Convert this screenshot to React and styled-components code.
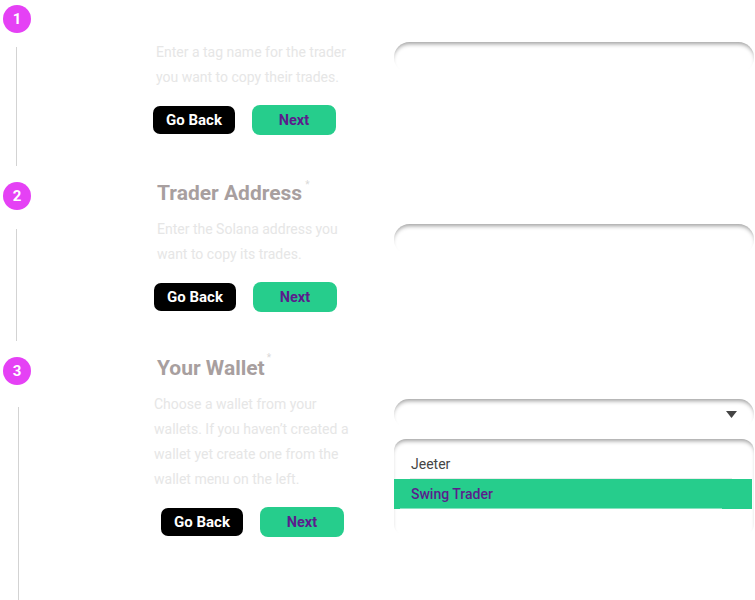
import React from "react";
import styled, { createGlobalStyle } from "styled-components";

const GlobalStyle = createGlobalStyle`
  html, body {
    margin: 0;
    padding: 0;
    background: #ffffff;
  }
  body {
    font-family: Roboto, "Noto Sans", Arial, sans-serif;
    overflow: hidden;
  }
  * { box-sizing: border-box; }
`;

const Page = styled.div`
  width: 755px;
  min-height: 600px;
  padding-top: 5px;
  display: flex;
  flex-direction: column;
  overflow: hidden;
`;

const Step = styled.section`
  display: flex;
  ${(p) => (p.$last ? "flex: 1;" : "")}
`;

const Rail = styled.div`
  width: 28px;
  margin-left: 3px;
  flex-shrink: 0;
  display: flex;
  flex-direction: column;
  align-items: center;
`;

const Circle = styled.div`
  width: 28px;
  height: 28px;
  border-radius: 50%;
  background: #e541f5;
  color: #ffffff;
  font-weight: 700;
  font-size: 15px;
  display: flex;
  align-items: center;
  justify-content: center;
  flex-shrink: 0;
`;

const Line = styled.div`
  flex: 1;
  width: 1px;
  align-self: flex-start;
  background: #d3d3d3;
  margin-left: ${(p) => p.$x}px;
  margin-top: ${(p) => p.$top}px;
  margin-bottom: ${(p) => p.$bottom}px;
`;

const Body = styled.div`
  margin-left: 126px;
  width: 237px;
  flex-shrink: 0;
  padding-bottom: ${(p) => p.$pb}px;
`;

const Heading = styled.h2`
  margin: 1px 0 0;
  height: 20px;
  font-size: 21px;
  line-height: 20px;
  font-weight: 700;
  color: #a89f9f;
  white-space: nowrap;
`;

const Star = styled.span`
  font-size: 10px;
  font-weight: 400;
  color: #d9d9d9;
  vertical-align: top;
  line-height: 10px;
  margin-left: ${(p) => p.$gap}px;
  position: relative;
  top: ${(p) => p.$top}px;
`;

const Desc = styled.p`
  margin: 14px 0 0 ${(p) => p.$dx}px;
  width: 205px;
  font-size: 14px;
  line-height: 25px;
  color: #e6e6e6;
`;

const Actions = styled.div`
  display: flex;
  align-items: center;
  gap: 17px;
  margin: 15px 0 0 ${(p) => p.$dx}px;
`;

const BackButton = styled.button`
  width: 82px;
  height: 28px;
  border: none;
  border-radius: 7px;
  background: #000000;
  color: #ffffff;
  font-family: inherit;
  font-size: 15px;
  font-weight: 700;
  padding: 0;
`;

const NextButton = styled.button`
  width: 84px;
  height: 30px;
  border: none;
  border-radius: 8px;
  background: #26cd8c;
  color: #5b1d8c;
  font-family: inherit;
  font-size: 14.5px;
  font-weight: 700;
  padding: 0;
`;

const Field = styled.div`
  flex: 1;
  min-width: 0;
  margin-top: ${(p) => p.$top}px;
  margin-right: 1px;
`;

const wellShadow = "inset 0 4px 4px -2px rgba(0, 0, 0, 0.38)";

const Input = styled.input`
  display: block;
  width: 100%;
  height: 31px;
  border: none;
  border-radius: 16px;
  background: #ffffff;
  box-shadow: ${wellShadow};
  outline: none;
  padding: 0 16px;
`;

const Select = styled.div`
  height: 30px;
  border-radius: 15px;
  background: #ffffff;
  box-shadow: ${wellShadow};
  display: flex;
  align-items: center;
  justify-content: flex-end;
  padding-right: 17px;
`;

const Menu = styled.ul`
  list-style: none;
  margin: 10px 0 0;
  padding: 10px 2px 27px 0;
  border-radius: 12px;
  background: #ffffff;
  box-shadow: ${wellShadow};
`;

const Option = styled.li`
  position: relative;
  height: 30px;
  display: flex;
  align-items: center;
  padding-left: 17px;
  font-size: 14px;
  font-weight: ${(p) => (p.$selected ? 500 : 400)};
  color: ${(p) => (p.$selected ? "#5b1d8c" : "#454545")};
  background: ${(p) => (p.$selected ? "#26cd8c" : "transparent")};

  &::after {
    content: "";
    position: absolute;
    bottom: 0;
    height: 1px;
    left: ${(p) => p.$sepLeft}px;
    right: ${(p) => p.$sepRight}px;
    background: ${(p) =>
      p.$selected ? "rgba(255,255,255,0.45)" : "rgba(0,0,0,0.08)"};
  }
`;

const Caret = () => (
  <svg width="11" height="7" viewBox="0 0 11 7">
    <path d="M0 0 H11 L5.5 7 Z" fill="#444444" />
  </svg>
);

export default function App() {
  return (
    <Page>
      <GlobalStyle />

      <Step>
        <Rail>
          <Circle>1</Circle>
          <Line $x={13} $top={14} $bottom={16} />
        </Rail>
        <Body $pb={47}>
          <Heading />
          <Desc $dx={-1}>
            Enter a tag name for the trader you want to copy their trades.
          </Desc>
          <Actions $dx={-4}>
            <BackButton>Go Back</BackButton>
            <NextButton>Next</NextButton>
          </Actions>
        </Body>
        <Field $top={37}>
          <Input aria-label="Tag name" />
        </Field>
      </Step>

      <Step>
        <Rail>
          <Circle>2</Circle>
          <Line $x={13} $top={19} $bottom={16} />
        </Rail>
        <Body $pb={45}>
          <Heading>
            Trader Address<Star $gap={3} $top={-3}>*</Star>
          </Heading>
          <Desc $dx={0}>
            Enter the Solana address you want to copy its trades.
          </Desc>
          <Actions $dx={-3}>
            <BackButton>Go Back</BackButton>
            <NextButton>Next</NextButton>
          </Actions>
        </Body>
        <Field $top={42}>
          <Input aria-label="Trader address" />
        </Field>
      </Step>

      <Step $last>
        <Rail>
          <Circle>3</Circle>
          <Line $x={15} $top={22} $bottom={0} />
        </Rail>
        <Body $pb={0}>
          <Heading>
            Your Wallet<Star $gap={2} $top={-5}>*</Star>
          </Heading>
          <Desc $dx={-3}>
            Choose a wallet from your wallets. If you haven’t created a wallet
            yet create one from the wallet menu on the left.
          </Desc>
          <Actions $dx={4}>
            <BackButton>Go Back</BackButton>
            <NextButton>Next</NextButton>
          </Actions>
        </Body>
        <Field $top={42}>
          <Select>
            <Caret />
          </Select>
          <Menu>
            <Option $sepLeft={16} $sepRight={20}>
              Jeeter
            </Option>
            <Option $selected $sepLeft={6} $sepRight={30}>
              Swing Trader
            </Option>
          </Menu>
        </Field>
      </Step>
    </Page>
  );
}
